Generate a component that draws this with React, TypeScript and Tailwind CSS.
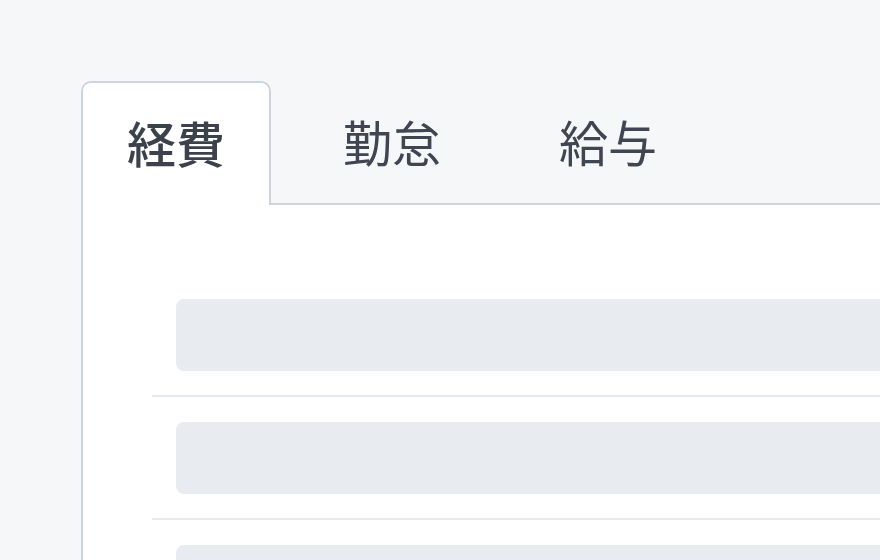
import React from "react";

export default function App() {
  const tabs = ["経費", "勤怠", "給与"];
  return (
    <div
      className="w-[880px] h-[560px] overflow-hidden bg-[#f6f7f9] pt-[81px] pl-[81px]"
      style={{ fontFamily: '"Noto Sans CJK JP", "Noto Sans", sans-serif' }}
    >
      <div className="w-[1000px]">
        <div className="flex gap-[26px] relative z-10">
          {tabs.map((t, i) => (
            <div
              key={t}
              className={
                i === 0
                  ? "w-[190px] h-[124px] -mb-[2px] flex items-center justify-center rounded-t-[10px] border-2 border-b-0 border-[#cdd4dd] bg-white text-[49px] font-medium text-[#3b424c] leading-none"
                  : "w-[190px] h-[124px] -mb-[2px] flex items-center justify-center text-[49px] font-normal text-[#3f4652] leading-none"
              }
            >
              <span className="-mt-[6px]">{t}</span>
            </div>
          ))}
        </div>
        <div className="bg-white border-l-2 border-t-2 border-[#cdd4dd] h-[400px] pt-[69px] pl-[69px]">
          {[0, 1, 2].map((i) => (
            <div key={i} className="border-b-2 border-[#e6e9ee] pt-[25px] pb-[24px] pl-[24px]">
              <div className="h-[72px] rounded-[8px] bg-[#e8ebf0]" />
            </div>
          ))}
        </div>
      </div>
    </div>
  );
}
